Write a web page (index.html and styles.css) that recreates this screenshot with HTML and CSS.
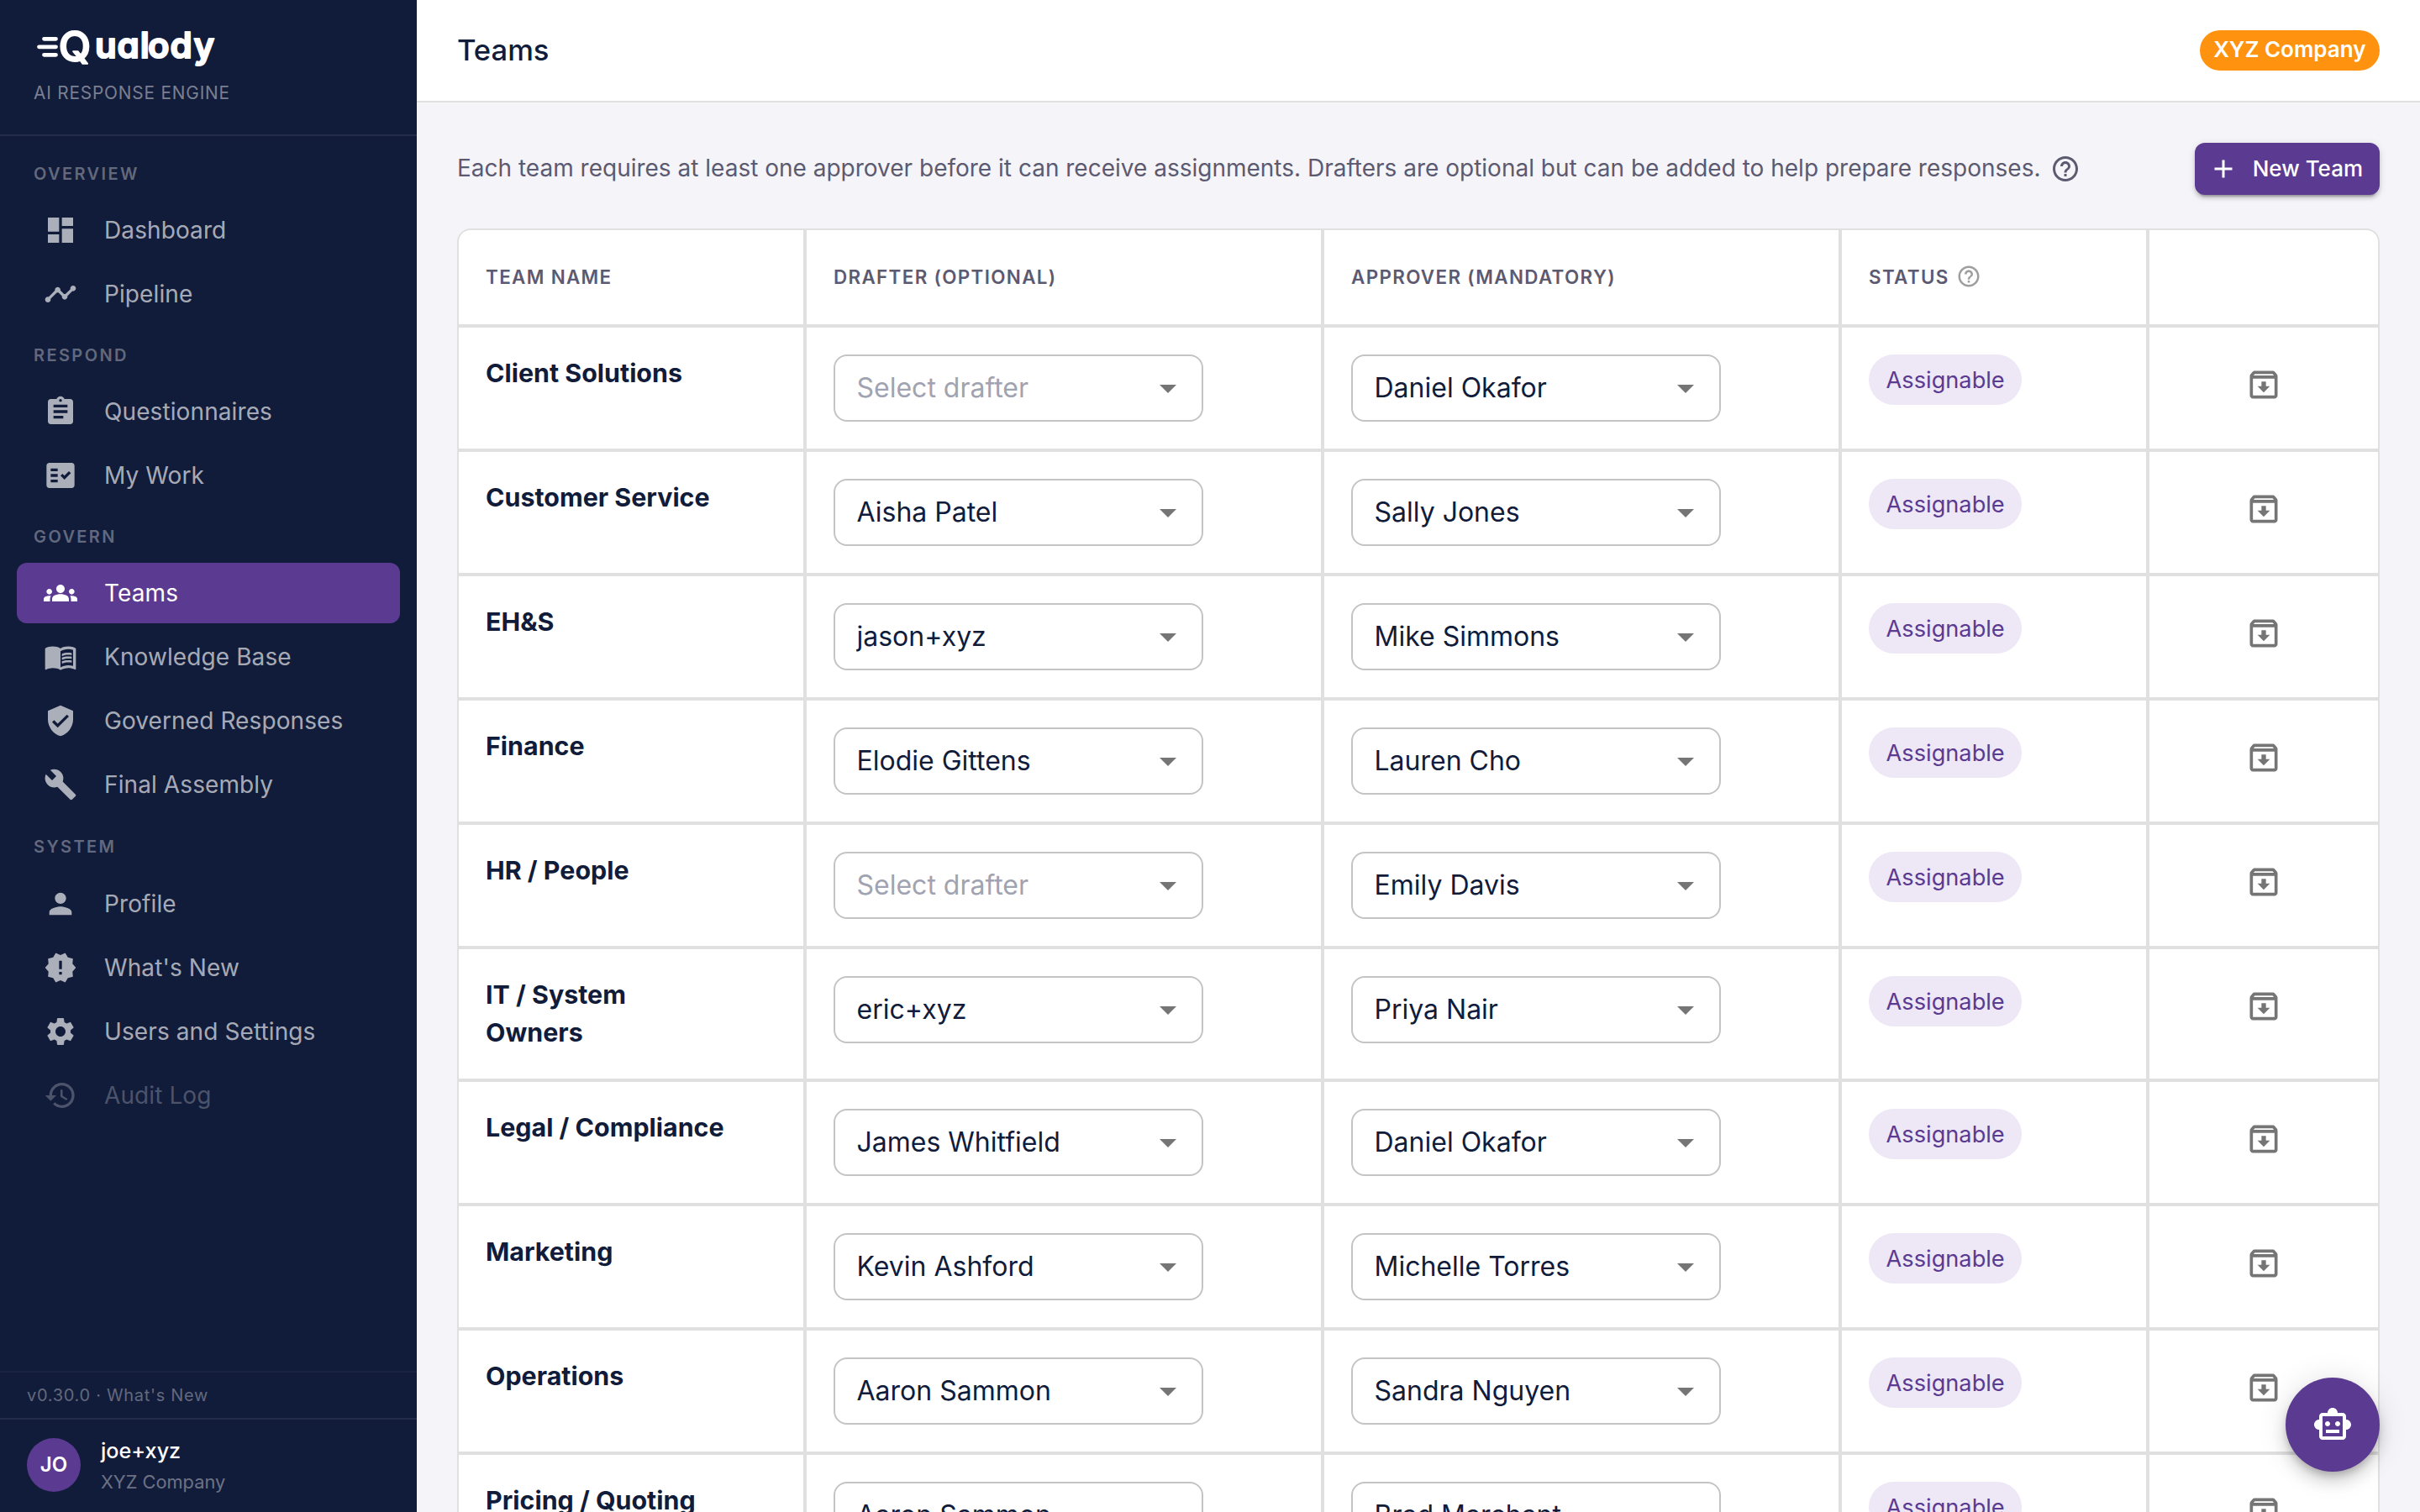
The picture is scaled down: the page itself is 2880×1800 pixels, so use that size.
FILE: index.html
```html
<!DOCTYPE html>
<html lang="en">
<head>
  <meta charset="UTF-8">
  <title>Teams - Qualody</title>
  <link rel="stylesheet" href="styles.css">
</head>
<body>

<svg class="sprite">
  <symbol id="arrow" viewBox="0 0 24 24"><path d="M7 10l5 5 5-5z"/></symbol>
  <symbol id="help" viewBox="0 0 24 24"><path d="M11 18h2v-2h-2v2zm1-16C6.48 2 2 6.48 2 12s4.48 10 10 10 10-4.48 10-10S17.52 2 12 2zm0 18c-4.41 0-8-3.59-8-8s3.59-8 8-8 8 3.59 8 8-3.59 8-8 8zm0-14c-2.21 0-4 1.79-4 4h2c0-1.1.9-2 2-2s2 .9 2 2c0 2-3 1.75-3 5h2c0-2.25 3-2.5 3-5 0-2.21-1.79-4-4-4z"/></symbol>
  <symbol id="archive" viewBox="0 0 24 24"><path d="M20.54 5.23l-1.39-1.68C18.88 3.21 18.47 3 18 3H6c-.47 0-.88.21-1.16.55L3.46 5.23C3.17 5.57 3 6.02 3 6.5V19c0 1.1.9 2 2 2h14c1.1 0 2-.9 2-2V6.5c0-.48-.17-.93-.46-1.27zM6.24 5h11.52l.83 1H5.42l.82-1zM5 19V8h14v11H5zm8.45-9h-2.9v3H8l4 4 4-4h-2.55z"/></symbol>
</svg>

<div class="app">
  <aside class="sidebar">
    <div class="brand">
      <svg class="logo" viewBox="40 32 220 52">
        <path class="speed" d="M52.5 46.3h14M46.5 55.8h20M52.5 65.3h14"/>
        <text class="logo-q" x="69.8" y="72.5">Q</text>
        <text x="113 139.5 166.8 176 202.5 230.5" y="69">ualody</text>
      </svg>
      <div class="tagline">AI RESPONSE ENGINE</div>
    </div>

    <nav class="nav">
      <div class="nav-label">OVERVIEW</div>
      <a class="nav-item"><svg viewBox="0 0 24 24"><path d="M3 13h8V3H3v10zm0 8h8v-6H3v6zm10 0h8V11h-8v10zm0-18v6h8V3h-8z"/></svg>Dashboard</a>
      <a class="nav-item"><svg viewBox="0 0 24 24"><path d="M23 8c0 1.1-.9 2-2 2-.18 0-.35-.02-.51-.07l-3.56 3.55c.05.16.07.34.07.52 0 1.1-.9 2-2 2s-2-.9-2-2c0-.18.02-.36.07-.52l-2.55-2.55c-.16.05-.34.07-.52.07s-.36-.02-.52-.07l-4.55 4.56c.05.16.07.33.07.51 0 1.1-.9 2-2 2s-2-.9-2-2 .9-2 2-2c.18 0 .35.02.51.07l4.56-4.55C8.02 9.36 8 9.18 8 9c0-1.1.9-2 2-2s2 .9 2 2c0 .18-.02.36-.07.52l2.55 2.55c.16-.05.34-.07.52-.07s.36.02.52.07l3.55-3.56C19.02 8.35 19 8.18 19 8c0-1.1.9-2 2-2s2 .9 2 2z"/></svg>Pipeline</a>

      <div class="nav-label">RESPOND</div>
      <a class="nav-item"><svg viewBox="0 0 24 24"><path d="M19 3h-4.18C14.4 1.84 13.3 1 12 1c-1.3 0-2.4.84-2.82 2H5c-1.1 0-2 .9-2 2v14c0 1.1.9 2 2 2h14c1.1 0 2-.9 2-2V5c0-1.1-.9-2-2-2zm-7 0c.55 0 1 .45 1 1s-.45 1-1 1-1-.45-1-1 .45-1 1-1zm2 14H7v-2h7v2zm3-4H7v-2h10v2zm0-4H7V7h10v2z"/></svg>Questionnaires</a>
      <a class="nav-item"><svg viewBox="0 0 24 24"><path d="M20 3H4c-1.1 0-2 .9-2 2v14c0 1.1.9 2 2 2h16c1.1 0 2-.9 2-2V5c0-1.1-.9-2-2-2zM10 17H5v-2h5v2zm0-4H5v-2h5v2zm0-4H5V7h5v2zm4.82 6L12 12.16l1.41-1.41 1.41 1.42L17.99 9l1.42 1.42L14.82 15z"/></svg>My Work</a>

      <div class="nav-label">GOVERN</div>
      <a class="nav-item active"><svg viewBox="0 0 24 24"><path d="M12 12.75c1.63 0 3.07.39 4.24.9 1.08.48 1.76 1.56 1.76 2.73V18H6v-1.61c0-1.18.68-2.26 1.76-2.73 1.17-.52 2.61-.91 4.24-.91zM4 13c1.1 0 2-.9 2-2s-.9-2-2-2-2 .9-2 2 .9 2 2 2zm1.13 1.1c-.37-.06-.74-.1-1.13-.1-.99 0-1.93.21-2.78.58C.48 14.9 0 15.62 0 16.43V18h4.5v-1.61c0-.83.23-1.61.63-2.29zM20 13c1.1 0 2-.9 2-2s-.9-2-2-2-2 .9-2 2 .9 2 2 2zm4 3.43c0-.81-.48-1.53-1.22-1.85-.85-.37-1.79-.58-2.78-.58-.39 0-.76.04-1.13.1.4.68.63 1.46.63 2.29V18H24v-1.57zM12 6c1.66 0 3 1.34 3 3s-1.34 3-3 3-3-1.34-3-3 1.34-3 3-3z"/></svg>Teams</a>
      <a class="nav-item"><svg viewBox="0 0 24 24"><path d="M21 5c-1.11-.35-2.33-.5-3.5-.5-1.95 0-4.05.4-5.5 1.5-1.45-1.1-3.55-1.5-5.5-1.5S2.45 4.9 1 6v14.65c0 .25.25.5.5.5.1 0 .15-.05.25-.05C3.1 20.45 5.05 20 6.5 20c1.95 0 4.05.4 5.5 1.5 1.35-.85 3.8-1.5 5.5-1.5 1.65 0 3.35.3 4.75 1.05.1.05.15.05.25.05.25 0 .5-.25.5-.5V6c-.6-.45-1.25-.75-2-1zm0 13.5c-1.1-.35-2.3-.5-3.5-.5-1.7 0-4.15.65-5.5 1.5V8c1.35-.85 3.8-1.5 5.5-1.5 1.2 0 2.4.15 3.5.5v11.5z"/><path d="M17.5 10.5c.88 0 1.73.09 2.5.26V9.24c-.79-.15-1.64-.24-2.5-.24-1.7 0-3.24.29-4.5.83v1.66c1.13-.64 2.7-.99 4.5-.99zM13 12.49v1.66c1.13-.64 2.7-.99 4.5-.99.88 0 1.73.09 2.5.26V11.9c-.79-.15-1.64-.24-2.5-.24-1.7 0-3.24.3-4.5.83zm4.5 1.84c-1.7 0-3.24.29-4.5.83v1.66c1.13-.64 2.7-.99 4.5-.99.88 0 1.73.09 2.5.26v-1.52c-.79-.16-1.64-.24-2.5-.24z"/></svg>Knowledge Base</a>
      <a class="nav-item"><svg viewBox="0 0 24 24"><path d="M12 1L3 5v6c0 5.55 3.84 10.74 9 12 5.16-1.26 9-6.45 9-12V5l-9-4zm-2 16l-4-4 1.41-1.41L10 14.17l6.59-6.59L18 9l-8 8z"/></svg>Governed Responses</a>
      <a class="nav-item"><svg viewBox="0 0 24 24"><path d="M22.7 19l-9.1-9.1c.9-2.3.4-5-1.5-6.9-2-2-5-2.4-7.4-1.3L9 6 6 9 1.6 4.7C.4 7.1.9 10.1 2.9 12.1c1.9 1.9 4.6 2.4 6.9 1.5l9.1 9.1c.4.4 1 .4 1.4 0l2.3-2.3c.5-.4.5-1.1.1-1.4z"/></svg>Final Assembly</a>

      <div class="nav-label system">SYSTEM</div>
      <a class="nav-item"><svg viewBox="0 0 24 24"><path d="M12 12c2.21 0 4-1.79 4-4s-1.79-4-4-4-4 1.79-4 4 1.79 4 4 4zm0 2c-2.67 0-8 1.34-8 4v2h16v-2c0-2.66-5.33-4-8-4z"/></svg>Profile</a>
      <a class="nav-item"><svg viewBox="0 0 24 24"><path d="M23 12l-2.44-2.78.34-3.68-3.61-.82-1.89-3.18L12 3 8.6 1.54 6.71 4.72l-3.61.81.34 3.68L1 12l2.44 2.78-.34 3.69 3.61.82 1.89 3.18L12 21l3.4 1.46 1.89-3.18 3.61-.82-.34-3.68L23 12zm-10 5h-2v-2h2v2zm0-4h-2V7h2v6z"/></svg>What's New</a>
      <a class="nav-item"><svg viewBox="0 0 24 24"><path d="M19.14 12.94c.04-.3.06-.61.06-.94 0-.32-.02-.64-.07-.94l2.03-1.58c.18-.14.23-.41.12-.61l-1.92-3.32c-.12-.22-.37-.29-.59-.22l-2.39.96c-.5-.38-1.03-.7-1.62-.94l-.36-2.54c-.04-.24-.24-.41-.48-.41h-3.84c-.24 0-.43.17-.47.41l-.36 2.54c-.59.24-1.13.57-1.62.94l-2.39-.96c-.22-.08-.47 0-.59.22L2.74 8.87c-.12.21-.08.47.12.61l2.03 1.58c-.05.3-.09.63-.09.94s.02.64.07.94l-2.03 1.58c-.18.14-.23.41-.12.61l1.92 3.32c.12.22.37.29.59.22l2.39-.96c.5.38 1.03.7 1.62.94l.36 2.54c.05.24.24.41.48.41h3.84c.24 0 .44-.17.47-.41l.36-2.54c.59-.24 1.13-.56 1.62-.94l2.39.96c.22.08.47 0 .59-.22l1.92-3.32c.12-.22.07-.47-.12-.61l-2.01-1.58zM12 15.6c-1.98 0-3.6-1.62-3.6-3.6s1.62-3.6 3.6-3.6 3.6 1.62 3.6 3.6-1.62 3.6-3.6 3.6z"/></svg>Users and Settings</a>
      <a class="nav-item disabled"><svg viewBox="0 0 24 24"><path d="M13 3c-4.97 0-9 4.03-9 9H1l3.89 3.89.07.14L9 12H6c0-3.87 3.13-7 7-7s7 3.13 7 7-3.13 7-7 7c-1.93 0-3.68-.79-4.94-2.06l-1.42 1.42C8.27 19.99 10.51 21 13 21c4.97 0 9-4.03 9-9s-4.03-9-9-9zm-1 5v5l4.28 2.54.72-1.21-3.5-2.08V8H12z"/></svg>Audit Log</a>
    </nav>

    <div class="version">v0.30.0 · What's New</div>
    <div class="user">
      <div class="avatar">JO</div>
      <div>
        <div class="user-name">joe+xyz</div>
        <div class="user-company">XYZ Company</div>
      </div>
    </div>
  </aside>

  <main class="main">
    <header class="topbar">
      <h1>Teams</h1>
      <span class="company">XYZ Company</span>
    </header>

    <div class="content">
      <div class="intro">
        <p>Each team requires at least one approver before it can receive assignments. Drafters are optional but can be added to help prepare responses.</p>
        <svg class="intro-help"><use href="#help"/></svg>
        <button class="new-team"><svg viewBox="0 0 24 24"><path d="M19 13h-6v6h-2v-6H5v-2h6V5h2v6h6v2z"/></svg>New Team</button>
      </div>

      <div class="table">
        <div class="th">TEAM NAME</div>
        <div class="th">DRAFTER (OPTIONAL)</div>
        <div class="th">APPROVER (MANDATORY)</div>
        <div class="th">STATUS <svg><use href="#help"/></svg></div>
        <div class="th"></div>

        <div class="td name">Client Solutions</div>
        <div class="td"><div class="select empty">Select drafter<svg><use href="#arrow"/></svg></div></div>
        <div class="td"><div class="select">Daniel Okafor<svg><use href="#arrow"/></svg></div></div>
        <div class="td"><span class="chip">Assignable</span></div>
        <div class="td action"><svg><use href="#archive"/></svg></div>

        <div class="td name">Customer Service</div>
        <div class="td"><div class="select">Aisha Patel<svg><use href="#arrow"/></svg></div></div>
        <div class="td"><div class="select">Sally Jones<svg><use href="#arrow"/></svg></div></div>
        <div class="td"><span class="chip">Assignable</span></div>
        <div class="td action"><svg><use href="#archive"/></svg></div>

        <div class="td name">EH&amp;S</div>
        <div class="td"><div class="select">jason+xyz<svg><use href="#arrow"/></svg></div></div>
        <div class="td"><div class="select">Mike Simmons<svg><use href="#arrow"/></svg></div></div>
        <div class="td"><span class="chip">Assignable</span></div>
        <div class="td action"><svg><use href="#archive"/></svg></div>

        <div class="td name">Finance</div>
        <div class="td"><div class="select">Elodie Gittens<svg><use href="#arrow"/></svg></div></div>
        <div class="td"><div class="select">Lauren Cho<svg><use href="#arrow"/></svg></div></div>
        <div class="td"><span class="chip">Assignable</span></div>
        <div class="td action"><svg><use href="#archive"/></svg></div>

        <div class="td name">HR / People</div>
        <div class="td"><div class="select empty">Select drafter<svg><use href="#arrow"/></svg></div></div>
        <div class="td"><div class="select">Emily Davis<svg><use href="#arrow"/></svg></div></div>
        <div class="td"><span class="chip">Assignable</span></div>
        <div class="td action"><svg><use href="#archive"/></svg></div>

        <div class="td name">IT / System<br>Owners</div>
        <div class="td"><div class="select">eric+xyz<svg><use href="#arrow"/></svg></div></div>
        <div class="td"><div class="select">Priya Nair<svg><use href="#arrow"/></svg></div></div>
        <div class="td"><span class="chip">Assignable</span></div>
        <div class="td action"><svg><use href="#archive"/></svg></div>

        <div class="td name">Legal / Compliance</div>
        <div class="td"><div class="select">James Whitfield<svg><use href="#arrow"/></svg></div></div>
        <div class="td"><div class="select">Daniel Okafor<svg><use href="#arrow"/></svg></div></div>
        <div class="td"><span class="chip">Assignable</span></div>
        <div class="td action"><svg><use href="#archive"/></svg></div>

        <div class="td name">Marketing</div>
        <div class="td"><div class="select">Kevin Ashford<svg><use href="#arrow"/></svg></div></div>
        <div class="td"><div class="select">Michelle Torres<svg><use href="#arrow"/></svg></div></div>
        <div class="td"><span class="chip">Assignable</span></div>
        <div class="td action"><svg><use href="#archive"/></svg></div>

        <div class="td name">Operations</div>
        <div class="td"><div class="select">Aaron Sammon<svg><use href="#arrow"/></svg></div></div>
        <div class="td"><div class="select">Sandra Nguyen<svg><use href="#arrow"/></svg></div></div>
        <div class="td"><span class="chip">Assignable</span></div>
        <div class="td action"><svg><use href="#archive"/></svg></div>

        <div class="td name">Pricing / Quoting</div>
        <div class="td"><div class="select">Aaron Sammon<svg><use href="#arrow"/></svg></div></div>
        <div class="td"><div class="select">Brad Marchant<svg><use href="#arrow"/></svg></div></div>
        <div class="td"><span class="chip">Assignable</span></div>
        <div class="td action"><svg><use href="#archive"/></svg></div>
      </div>
    </div>
  </main>
</div>

<button class="fab"><svg viewBox="0 0 24 24"><path d="M20 9V7c0-1.1-.9-2-2-2h-3c0-1.66-1.34-3-3-3S9 3.34 9 5H6c-1.1 0-2 .9-2 2v2c-1.66 0-3 1.34-3 3s1.34 3 3 3v4c0 1.1.9 2 2 2h12c1.1 0 2-.9 2-2v-4c1.66 0 3-1.34 3-3s-1.34-3-3-3zm-2 10H6V7h12v12zm-9-6c-.83 0-1.5-.67-1.5-1.5S8.17 10 9 10s1.5.67 1.5 1.5S9.83 13 9 13zm7.5-1.5c0 .83-.67 1.5-1.5 1.5s-1.5-.67-1.5-1.5.67-1.5 1.5-1.5 1.5.67 1.5 1.5zM8 15h8v2H8v-2z"/></svg></button>

</body>
</html>
```
FILE: styles.css
```css
* {
  box-sizing: border-box;
}
body {
  margin: 0;
  font-family: Inter, sans-serif;
  font-size: 28px;
  color: #111b3a;
  background: #f5f4f9;
}
svg {
  fill: currentColor;
  flex-shrink: 0;
}
button {
  font-family: inherit;
  border: none;
  padding: 0;
  cursor: pointer;
}
.sprite {
  display: none;
}
.app {
  display: flex;
  height: 100vh;
  overflow: hidden;
}

/* sidebar */
.sidebar {
  width: 496px;
  flex-shrink: 0;
  display: flex;
  flex-direction: column;
  background: #111b3a;
  color: #fff;
}
.brand {
  height: 162px;
  padding: 32px 40px 0;
  border-bottom: 2px solid rgba(255, 255, 255, 0.08);
}
.logo {
  display: block;
  width: 220px;
  height: 52px;
  margin-bottom: 15px;
  overflow: visible;
}
.logo text {
  font-weight: 600;
  font-size: 42px;
  font-feature-settings: "cv11";
  stroke: #fff;
  stroke-width: 2px;
  stroke-linejoin: round;
}
.logo .logo-q {
  font-weight: 500;
  font-size: 50px;
}
.speed {
  fill: none;
  stroke: #fff;
  stroke-width: 4.8px;
  stroke-linecap: round;
}
.tagline {
  font-size: 20.8px;
  line-height: 24px;
  letter-spacing: 0.83px;
  color: rgba(255, 255, 255, 0.45);
}
.nav {
  flex: 1;
  padding: 12px 20px 0;
}
.nav-label {
  height: 64px;
  padding-left: 20px;
  font-size: 20px;
  font-weight: 600;
  line-height: 66px;
  letter-spacing: 0.12em;
  color: rgba(255, 255, 255, 0.35);
}
.nav-label.system {
  height: 66px;
  line-height: 69px;
}
.nav-item {
  display: flex;
  align-items: center;
  height: 72px;
  margin-bottom: 4px;
  padding-left: 32px;
  border-radius: 12px;
  letter-spacing: 0.1px;
  color: rgba(255, 255, 255, 0.65);
}
.nav-item svg {
  width: 40px;
  height: 40px;
  margin-right: 32px;
}
.nav-item.active {
  background: #5b3a91;
  color: #fff;
}
.nav-item.disabled {
  color: rgba(255, 255, 255, 0.25);
}
.version {
  height: 56px;
  padding-left: 32px;
  border-top: 2px solid rgba(255, 255, 255, 0.04);
  font-size: 20px;
  line-height: 54px;
  letter-spacing: 0.7px;
  color: rgba(255, 255, 255, 0.35);
}
.user {
  display: flex;
  align-items: center;
  gap: 24px;
  height: 112px;
  padding: 0 32px 2px;
  border-top: 2px solid rgba(255, 255, 255, 0.08);
}
.avatar {
  width: 64px;
  height: 64px;
  border-radius: 50%;
  background: #5b3a91;
  font-size: 24px;
  font-weight: 600;
  line-height: 64px;
  text-align: center;
}
.user-name {
  padding-top: 2px;
  font-size: 25.2px;
  font-weight: 500;
  line-height: 38px;
}
.user-company {
  font-size: 21.8px;
  line-height: 36px;
  color: rgba(255, 255, 255, 0.4);
}

/* top bar */
.main {
  flex: 1;
}
.topbar {
  display: flex;
  align-items: center;
  justify-content: space-between;
  height: 122px;
  padding: 0 48px;
  background: #fff;
  border-bottom: 2px solid #e0e0e0;
}
.topbar h1 {
  margin: 0;
  padding-bottom: 2px;
  font-size: 34.6px;
  font-weight: 500;
}
.company {
  height: 48px;
  padding: 0 16.5px;
  border-radius: 24px;
  background: #ff930f;
  color: #fff;
  font-size: 26px;
  font-weight: 600;
  line-height: 46px;
}

/* content */
.content {
  padding: 48px;
}
.intro {
  display: flex;
  align-items: center;
  margin-bottom: 40px;
  color: #5c5a70;
}
.intro p {
  margin: 0;
  padding-bottom: 2px;
}
.intro-help {
  width: 36px;
  height: 36px;
  margin-left: 12px;
}
.new-team {
  display: flex;
  align-items: center;
  height: 62px;
  margin-left: auto;
  padding: 0 20px 1px 16px;
  border-radius: 12px;
  background: #5b3a91;
  box-shadow: 0 6px 2px -4px rgba(0, 0, 0, 0.2), 0 4px 4px rgba(0, 0, 0, 0.14), 0 2px 10px rgba(0, 0, 0, 0.12);
  color: #fff;
  font-size: 26px;
  font-weight: 500;
}
.new-team svg {
  width: 36px;
  height: 36px;
  margin-right: 17px;
}

/* teams table, the gaps are the grid lines */
.table {
  display: grid;
  grid-template-columns: 410px 612px 612px 362px 1fr;
  gap: 4px;
  border: 2px solid #e0e0e0;
  border-radius: 16px;
  background: #e0e0e0;
  overflow: hidden;
}
.th {
  display: flex;
  align-items: center;
  height: 112px;
  padding: 0 32px 2px;
  background: #fff;
  color: #5c5a70;
  font-size: 22.4px;
  font-weight: 600;
  letter-spacing: 0.06em;
}
.th svg {
  width: 30px;
  height: 30px;
  margin-left: 8px;
  color: #9e9e9e;
}
.td {
  min-height: 144px;
  padding: 32px;
  background: #fff;
}
.name {
  font-size: 30.4px;
  font-weight: 700;
  line-height: 45px;
}
.select {
  display: flex;
  align-items: center;
  justify-content: space-between;
  width: 440px;
  height: 80px;
  padding: 0 16px 0 25.5px;
  border: 2px solid #c4c4c4;
  border-radius: 16px;
  font-size: 32px;
  line-height: 38px;
}
.select.empty {
  color: #a0a3b1;
}
.select svg {
  width: 48px;
  height: 48px;
  color: #757575;
}
.chip {
  display: inline-block;
  height: 60px;
  padding: 0 20.6px;
  border-radius: 30px;
  background: #ede7f6;
  color: #5b3a91;
  font-size: 27.2px;
  line-height: 61px;
}
.action {
  display: flex;
  justify-content: center;
  padding-top: 46px;
}
.action svg {
  width: 44px;
  height: 44px;
  color: #757575;
}

/* assistant button */
.fab {
  position: fixed;
  right: 48px;
  bottom: 48px;
  display: flex;
  align-items: center;
  justify-content: center;
  width: 112px;
  height: 112px;
  border-radius: 50%;
  background: #5b3a91;
  color: #fff;
  box-shadow: 0 6px 10px -2px rgba(0, 0, 0, 0.2), 0 12px 20px rgba(0, 0, 0, 0.14), 0 2px 36px rgba(0, 0, 0, 0.12);
}
.fab svg {
  width: 48px;
  height: 48px;
}
```
